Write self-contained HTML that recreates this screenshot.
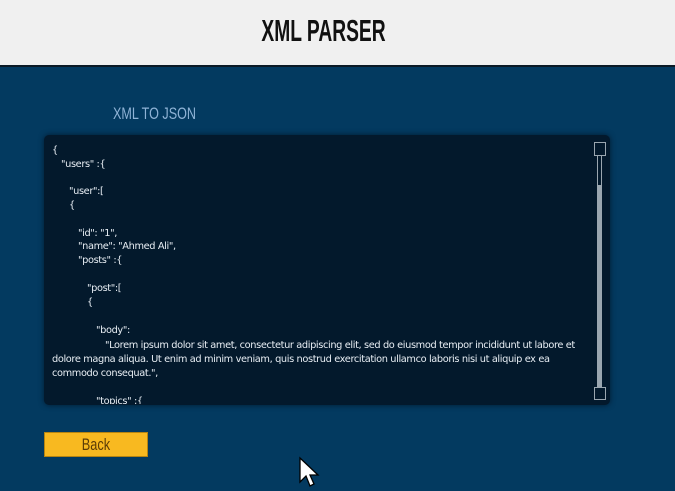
<!DOCTYPE html>
<html><head><style>
body{margin:0;width:675px;height:491px;overflow:hidden;background:#033a60;font-family:"Liberation Sans",sans-serif;position:relative}
.hdr{position:absolute;left:0;top:0;width:675px;height:65px;background:#f0f0f0;border-bottom:2px solid #0b1a26}
.hdr div{position:absolute;left:-14px;width:675px;top:13px;text-align:center;font-size:31px;font-weight:bold;color:#111;transform:scaleX(0.62)}
.sub{position:absolute;left:113px;top:104px;font-size:17px;color:#8fb3d6;transform:scaleX(0.74);transform-origin:left}
.panel{position:absolute;left:44px;top:135px;width:566px;height:270px;background:#03192c;border-radius:5px;overflow:hidden;box-shadow:0 0 6px #021a2e}
.l{position:absolute;font-size:9.8px;color:#e8eef4;white-space:nowrap;font-family:"DejaVu Sans","Liberation Sans",sans-serif;letter-spacing:-0.38px}
.sb{position:absolute;left:597px;top:150px;width:5px;height:240px;background:#9aa6b0}
.sbt{position:absolute;left:594px;top:142px;width:12px;height:14px;border:1px solid #9aa6b0;box-sizing:border-box;background:#03192c}
.sbt2{position:absolute;left:597px;top:150px;width:5px;height:36px;border:1px solid #9aa6b0;box-sizing:border-box;background:#03192c}
.sbb{position:absolute;left:594px;top:387px;width:12px;height:13px;border:1px solid #9aa6b0;box-sizing:border-box;background:#03192c}
.btn{position:absolute;left:44px;top:432px;width:104px;height:25px;background:#f8b920;border:1px solid #b78410;box-sizing:border-box;text-align:center;font-size:17px;line-height:24px;color:#5a3c07}
.btn span{display:inline-block;transform:scaleX(0.75)}
</style></head><body>
<div class="hdr"><div>XML PARSER</div></div>
<div class="sub">XML TO JSON</div>
<div class="panel"></div>
<div class="l" style="left:52px;top:145px">{</div>
<div class="l" style="left:61px;top:159px">"users" :{</div>
<div class="l" style="left:69px;top:186px">"user":[</div>
<div class="l" style="left:69px;top:200px">{</div>
<div class="l" style="left:78px;top:228px">"id": "1",</div>
<div class="l" style="left:78px;top:241px">"name": "Ahmed Ali",</div>
<div class="l" style="left:78px;top:255px">"posts" :{</div>
<div class="l" style="left:87px;top:283px">"post":[</div>
<div class="l" style="left:87px;top:297px">{</div>
<div class="l" style="left:96px;top:325px">"body":</div>
<div class="l" style="left:105px;top:340px">"Lorem ipsum dolor sit amet, consectetur adipiscing elit, sed do eiusmod tempor incididunt ut labore et</div>
<div class="l" style="left:52px;top:354px">dolore magna aliqua. Ut enim ad minim veniam, quis nostrud exercitation ullamco laboris nisi ut aliquip ex ea</div>
<div class="l" style="left:52px;top:368px">commodo consequat.",</div>
<div class="l" style="left:96px;top:396px;height:8px;overflow:hidden">"topics" :{</div>
<div class="sb"></div><div class="sbt2"></div><div class="sbt"></div><div class="sbb"></div>
<div class="btn"><span>Back</span></div>
<svg style="position:absolute;left:298px;top:456px" width="22" height="32" viewBox="0 0 22 32"><path d="M2 2 L2 26 L8 20 L12 30 L16 28 L12 19 L20 19 Z" fill="#fff" stroke="#000" stroke-width="1.3"/></svg>
</body></html>
